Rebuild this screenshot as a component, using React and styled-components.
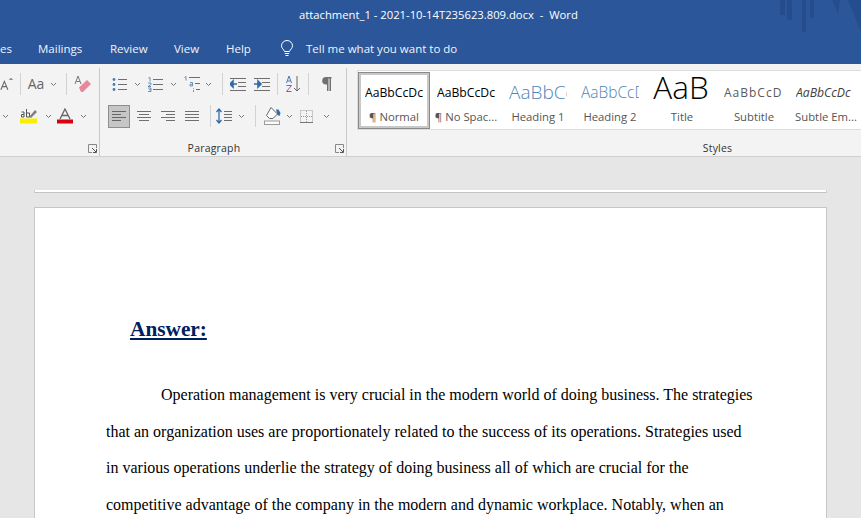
import React from "react";
import styled, { createGlobalStyle } from "styled-components";

const Global = createGlobalStyle`
  html, body { margin: 0; padding: 0; width: 861px; height: 518px; overflow: hidden; background: #e6e6e6; }
  #root { width: 861px; height: 518px; overflow: hidden; }
  * { box-sizing: border-box; }
`;
const Ui = styled.div`
  font-family: "Open Sans", "Noto Sans", sans-serif;
  width: 861px; height: 518px; display: flex; flex-direction: column; overflow: hidden;
`;
const TitleBar = styled.header`
  position: relative; height: 32px; flex: none; background: #2b579a; color: #fff;
  font-size: 11.25px; line-height: 30px; display: flex; align-items: flex-start; padding: 0 0 0 299px; white-space: pre;
`;
const Watermark = styled.svg`position: absolute; right: 0; top: 0;`;
const TabBar = styled.nav`
  height: 32px; flex: none; background: #2b579a; color: #f1f4f9; font-size: 11.5px;
  display: flex; align-items: center; overflow: hidden;
`;
const Tab = styled.span`flex: none; width: ${p => p.$w}px; white-space: nowrap; text-align: ${p => p.$right ? "right" : "left"};`;
const TellMe = styled.span`display: flex; align-items: center; gap: 12px; white-space: nowrap; margin-left: -6px;`;
const Ribbon = styled.section`
  height: 93px; flex: none; background: #f3f3f3; border-bottom: 1px solid #cfcfcf; display: flex;
`;
const Group = styled.div`
  position: relative; width: ${p => p.$w}px; flex: none; display: flex; flex-direction: column;
  border-right: ${p => p.$sep ? "1px solid #c8c8c8" : "none"}; height: 88px; margin-top: 4px;
`;
const ToolRow = styled.div`
  height: ${p => p.$h}px; flex: none; display: flex; align-items: center; padding-left: ${p => p.$pl || 0}px;
`;
const Slot = styled.div`
  width: ${p => p.$w}px; flex: none; display: flex; align-items: center; justify-content: center; height: 24px;
`;
const ActiveSlot = styled(Slot)`
  background: #c6c6c6; border: 1px solid #8e8e8e; height: 23px;
`;
const ToolSep = styled.i`
  width: 1px; height: 22px; background: #d2d2d2; flex: none; margin: 0 ${p => p.$m || 7}px;
`;
const GroupLabel = styled.div`
  margin-top: auto; height: 18px; font-size: 10.5px; letter-spacing: .2px; color: #333; text-align: center; line-height: 20px;
  padding-left: ${p => p.$pl || 0}px; padding-right: ${p => p.$pr || 0}px;
`;
const Launcher = styled.svg`position: absolute; right: 2px; bottom: 3px;`;
const StylesGroup = styled.div`
  flex: 1; margin-left: 10px; display: flex; flex-direction: column; margin-top: 6px; height: 86px;
`;
const Gallery = styled.div`
  height: 60px; background: #fff; border: 1px solid #dcdcdc; border-right: none; display: flex; padding: 1px 0 0 0;
`;
const StyleCell = styled.div`
  width: 72px; height: 57px; flex: none; overflow: hidden; display: flex; flex-direction: column; align-items: center;
  border: ${p => p.$active ? "1px solid #8a8a8a" : "none"};
  box-shadow: ${p => p.$active ? "inset 0 0 0 2px #c8c8c8" : "none"};
`;
const Sample = styled.div`
  height: ${p => p.$title ? 22 : 40}px; width: ${p => p.$w || 58}px; overflow: hidden; white-space: nowrap; display: flex;
  align-items: ${p => p.$title ? "flex-end" : "center"}; flex: none;
  margin-top: ${p => p.$title ? 5 : p.$active ? -1 : 0}px; margin-bottom: ${p => p.$title ? 13 : 0}px;
  margin-right: ${p => p.$title ? 2 : 0}px;
  line-height: ${p => p.$title ? "24px" : "normal"};
  justify-content: ${p => p.$title ? "center" : "flex-start"};
  font-size: ${p => p.$size}px; color: ${p => p.$color};
  font-weight: ${p => p.$weight || 400}; font-style: ${p => p.$italic ? "italic" : "normal"};
  letter-spacing: ${p => p.$ls || 0}px;
`;
const StyleName = styled.div`
  font-size: 11.3px; line-height: 16px; color: #555; white-space: nowrap; margin-top: -3px;
`;
const Document = styled.main`flex: 1; background: #e6e6e6; padding: 33px 0 0 34px; overflow: hidden;`;
const PrevPage = styled.div`
  width: 793px; height: 3px; background: #fff; border-bottom: 1px solid #c4c4c4; border-left: 1px solid #d0d0d0; border-right: 1px solid #d0d0d0;
`;
const Page = styled.article`
  width: 793px; height: 600px; margin-top: 14px; background: #fff; border: 1px solid #c6c6c6; padding: 106px 0 0 71px;
  font-family: "Liberation Serif", "Times New Roman", serif; color: #000;
`;
const Answer = styled.h1`
  margin: 0 0 33px 24px; font-size: 21.3px; line-height: 30px; font-weight: 700; color: #002060; text-decoration: underline;
`;
const Line = styled.div`
  font-size: 16px; line-height: 36.6px; white-space: nowrap; padding-left: ${p => p.$indent ? 55 : 0}px;
`;

const G = "#6f6f6f", B = "#4a7ab0";
const Ico = ({ w, h, children }) => <svg width={w} height={h} viewBox={`0 0 ${w} ${h}`} fill="none" strokeWidth="1">{children}</svg>;
const Chev = () => <Ico w={7} h={5}><path d="M1 1l2.500 2.500L6 1" stroke="#777" /></Ico>;
const Lines = ({ x, ws, ys, c = G }) => ys.map((y, i) => <path key={i} d={`M${x[i] ?? x[0]} ${y + .5}h${ws[i] ?? ws[0]}`} stroke={c} />);

const Bullets = () => <Ico w={15} h={15}>
  <circle cx="2" cy="2.500" r="1.400" fill={B} /><circle cx="2" cy="7.500" r="1.400" fill={B} /><circle cx="2" cy="12.500" r="1.400" fill={B} />
  <Lines x={[6]} ws={[9]} ys={[2, 7, 12]} />
</Ico>;
const Numbered = () => <Ico w={16} h={15}>
  <path d="M1.500 1l1.500-.5V4.500M1 6h3v1.500L1 9.500h3M1 11h3v3.500H1M2 12.800h2" stroke={B} strokeWidth=".8" />
  <Lines x={[6]} ws={[10]} ys={[2, 7, 12]} />
</Ico>;
const Multi = () => <Ico w={18} h={16}>
  <path d="M1.500 1.500L3 .5v4M7 6.500h2.500V10H7V8.300h2.500M10.500 12v.8M10.500 14v2" stroke={B} strokeWidth=".8" />
  <Lines x={[6, 12, 13]} ws={[11, 5, 4]} ys={[1, 7, 13]} />
</Ico>;
const Outdent = ({ flip }) => <Ico w={16} h={14}>
  <Lines x={[0, 8, 8, 0]} ws={[16, 8, 8, 16]} ys={[1, 5, 9, 13]} />
  <path d={flip ? "M0 7h5M4 4l3 3-3 3z" : "M7 7H2M3 4L0 7l3 3z"} stroke="#2e6cab" strokeWidth="1.600" fill="#2e6cab" />
</Ico>;
const Sort = () => <svg width="16" height="18" viewBox="0 0 16 18" fill="none">
  <path d="M1.500 8L4 1l2.500 7M2.500 6h3" stroke="#4a7ab0" />
  <path d="M1.500 10.500h5l-5 6h5" stroke="#8a5a9e" />
  <path d="M12 1v15M9 13l3 3 3-3" stroke="#666" />
</svg>;
const Pilcrow = () => <svg width="10" height="14" viewBox="0 0 10 14"><path d="M9.500 0H4a3.800 3.800 0 0 0 0 7.600h1V14h1.500V1.500h1V14H9V1.500h.5z" fill="#707070" /></svg>;
const Align = ({ kind }) => {
  const f = { l: [[0, 14], [0, 9], [0, 14], [0, 9]], c: [[0, 14], [2, 10], [0, 14], [2, 10]], r: [[0, 14], [5, 9], [0, 14], [5, 9]], j: [[0, 14], [0, 14], [0, 14], [0, 14]] }[kind];
  return <Ico w={14} h={11}><Lines x={f.map(a => a[0])} ws={f.map(a => a[1])} ys={[0, 3, 6, 9]} c={kind === "l" ? "#666" : G} /></Ico>;
};
const Spacing = () => <Ico w={16} h={16}>
  <path d="M3 1v14M0.500 4L3 1l2.500 3M0.500 12L3 15l2.500-3" stroke="#2e6cab" strokeWidth="1.300" />
  <Lines x={[8]} ws={[8]} ys={[3, 6, 9, 12]} />
</Ico>;
const Shading = () => <svg width="17" height="18" viewBox="0 0 17 18" fill="none">
  <path d="M7 .5l6.500 6.500L9 11.500H5.500L2.500 8.500z" stroke="#666" fill="#fbfbfb" />
  <path d="M12 2.500h2.500l2 3.500-1 3-2-1z" fill="#2e6cab" />
  <rect x=".5" y="14" width="15" height="3.500" stroke="#9a9a9a" fill="#fff" />
</svg>;
const Borders = () => <svg width="13" height="13" viewBox="0 0 13 13" fill="none">
  <rect x=".5" y=".5" width="12" height="12" stroke="#9a9a9a" strokeDasharray="1 1" />
  <path d="M6.500 1v11M1 6.500h11" stroke="#9a9a9a" strokeDasharray="1 1" />
  <path d="M0 12.500h13" stroke="#777" />
</svg>;
const Shrink = () => <svg width="16" height="16" viewBox="0 0 16 16" fill="none">
  <path d="M1 14.500L5 5l4 9.500M2.500 11h5" stroke="#6a6a6a" strokeWidth="1.300" />
  <path d="M10 3l2.500-2L15 3z" fill="#6a6a6a" />
</svg>;
const Eraser = () => <svg width="18" height="18" viewBox="0 0 18 18" fill="none">
  <path d="M1 9L4 1l3 8M2 6.500h4" stroke="#7a7a7a" />
  <path d="M5 12.500l8-7.500 4 4-8 8h-2z" fill="#e8899b" />
</svg>;
const Highlight = () => <svg width="18" height="16" viewBox="0 0 18 16" fill="none">
  <path d="M1.500 4h2.500v5H1.500V6.500H4M6.500 1v8h3V5h-3" stroke="#555" />
  <path d="M9 9l6-7 2 2-6 6z" fill="#808080" />
  <rect y="10.500" width="17" height="5" fill="#f8f000" />
</svg>;
const FontColor = () => <svg width="16" height="16" viewBox="0 0 16 16" fill="none">
  <path d="M3 11L8 1l5 10M4.800 7.500h6.400" stroke="#666" strokeWidth="1.300" />
  <rect y="11.500" width="16" height="4" fill="#d8000c" />
</svg>;
const Corner = () => <Launcher width="9" height="9" viewBox="0 0 9 9" fill="none">
  <path d="M8.500 4V.5H.5v8H4" stroke="#888" /><path d="M4 4l4 4M5 8.500h3.500V5" stroke="#555" />
</Launcher>;
const Bulb = () => <svg width="14" height="17" viewBox="0 0 14 17" fill="none">
  <path d="M4.500 11.500C4 9.500 1.500 8.500 1.500 5.800a5.500 5.300 0 0 1 11 0c0 2.700-2.500 3.700-3 5.700z" stroke="#fff" />
  <path d="M4.800 13.500h4.400M5.500 15.500h3" stroke="#fff" />
</svg>;
const AaLabel = styled.span`font-size: 14px; color: #666; line-height: 1;`;

const styleCells = [
  { name: "¶ Normal", text: "AaBbCcDc", size: 12.200, color: "#000", active: true },
  { name: "¶ No Spac...", text: "AaBbCcDc", size: 12.200, color: "#000" },
  { name: "Heading 1", text: "AaBbCc", size: 19, color: "#4d86b8", weight: 300 },
  { name: "Heading 2", text: "AaBbCcD", size: 15.500, color: "#4d86b8", weight: 300 },
  { name: "Title", text: "AaB", size: 31.500, color: "#000", weight: 300, title: true, w: 60 },
  { name: "Subtitle", text: "AaBbCcD", size: 12, color: "#5a5a5a", ls: 1, w: 60 },
  { name: "Subtle Em...", text: "AaBbCcDc", size: 12.200, color: "#404040", italic: true, w: 60 },
];

export default function App() {
  return (
    <Ui>
      <Global />
      <TitleBar>
        attachment_1 - 2021-10-14T235623.809.docx  -  Word
        <Watermark width="81" height="32" viewBox="0 0 81 32">
          <path d="M0 0h5v15H0zM7 0h5v20H7zM22 0h4v32h-4zM30 0h4v18h-4zM52 0h8l-2 14zM68 0h13v32z" fill="#254d8d" />
        </Watermark>
      </TitleBar>
      <TabBar>
        <Tab $w={11} $right>es</Tab>
        <Tab $w={27} />
        <Tab $w={72}>Mailings</Tab>
        <Tab $w={64}>Review</Tab>
        <Tab $w={52}>View</Tab>
        <Tab $w={60}>Help</Tab>
        <TellMe><Bulb />Tell me what you want to do</TellMe>
      </TabBar>
      <Ribbon>
        <Group $w={100} $sep>
          <ToolRow $h={32}>
            <Slot $w={14}><Shrink /></Slot>
            <ToolSep $m={6} />
            <Slot $w={18}><AaLabel>Aa</AaLabel></Slot>
            <Slot $w={16}><Chev /></Slot>
            <ToolSep $m={5} />
            <Slot $w={22}><Eraser /></Slot>
          </ToolRow>
          <ToolRow $h={32}>
            <Slot $w={11}><Chev /></Slot>
            <Slot $w={6} />
            <Slot $w={24}><Highlight /></Slot>
            <Slot $w={14}><Chev /></Slot>
            <Slot $w={20}><FontColor /></Slot>
            <Slot $w={16}><Chev /></Slot>
          </ToolRow>
          <Corner />
        </Group>
        <Group $w={247} $sep>
          <ToolRow $h={32} $pl={11}>
            <Slot $w={16}><Bullets /></Slot>
            <Slot $w={20}><Chev /></Slot>
            <Slot $w={16}><Numbered /></Slot>
            <Slot $w={20}><Chev /></Slot>
            <Slot $w={18}><Multi /></Slot>
            <Slot $w={14}><Chev /></Slot>
            <ToolSep $m={7} />
            <Slot $w={16}><Outdent /></Slot>
            <Slot $w={8} />
            <Slot $w={16}><Outdent flip /></Slot>
            <ToolSep $m={7} />
            <Slot $w={16}><Sort /></Slot>
            <ToolSep $m={7} />
            <Slot $w={22}><Pilcrow /></Slot>
          </ToolRow>
          <ToolRow $h={32} $pl={8}>
            <ActiveSlot $w={22}><Align kind="l" /></ActiveSlot>
            <Slot $w={28}><Align kind="c" /></Slot>
            <Slot $w={20}><Align kind="r" /></Slot>
            <Slot $w={28}><Align kind="j" /></Slot>
            <ToolSep $m={4} />
            <Slot $w={18}><Spacing /></Slot>
            <Slot $w={16}><Chev /></Slot>
            <ToolSep $m={6} />
            <Slot $w={20}><Shading /></Slot>
            <Slot $w={14}><Chev /></Slot>
            <Slot $w={20}><Borders /></Slot>
            <Slot $w={20}><Chev /></Slot>
          </ToolRow>
          <GroupLabel $pr={18}>Paragraph</GroupLabel>
          <Corner />
        </Group>
        <StylesGroup>
          <Gallery>
            {styleCells.map(s => (
              <StyleCell key={s.name} $active={s.active}>
                <Sample $active={s.active} $size={s.size} $color={s.color} $weight={s.weight} $italic={s.italic} $ls={s.ls} $title={s.title} $w={s.w}>{s.text}</Sample>
                <StyleName>{s.name}</StyleName>
              </StyleCell>
            ))}
          </Gallery>
          <GroupLabel $pl={216}>Styles</GroupLabel>
        </StylesGroup>
      </Ribbon>
      <Document>
        <PrevPage />
        <Page>
          <Answer>Answer:</Answer>
          <Line $indent>Operation management is very crucial in the modern world of doing business. The strategies</Line>
          <Line>that an organization uses are proportionately related to the success of its operations. Strategies used</Line>
          <Line>in various operations underlie the strategy of doing business all of which are crucial for the</Line>
          <Line>competitive advantage of the company in the modern and dynamic workplace. Notably, when an</Line>
        </Page>
      </Document>
    </Ui>
  );
}
